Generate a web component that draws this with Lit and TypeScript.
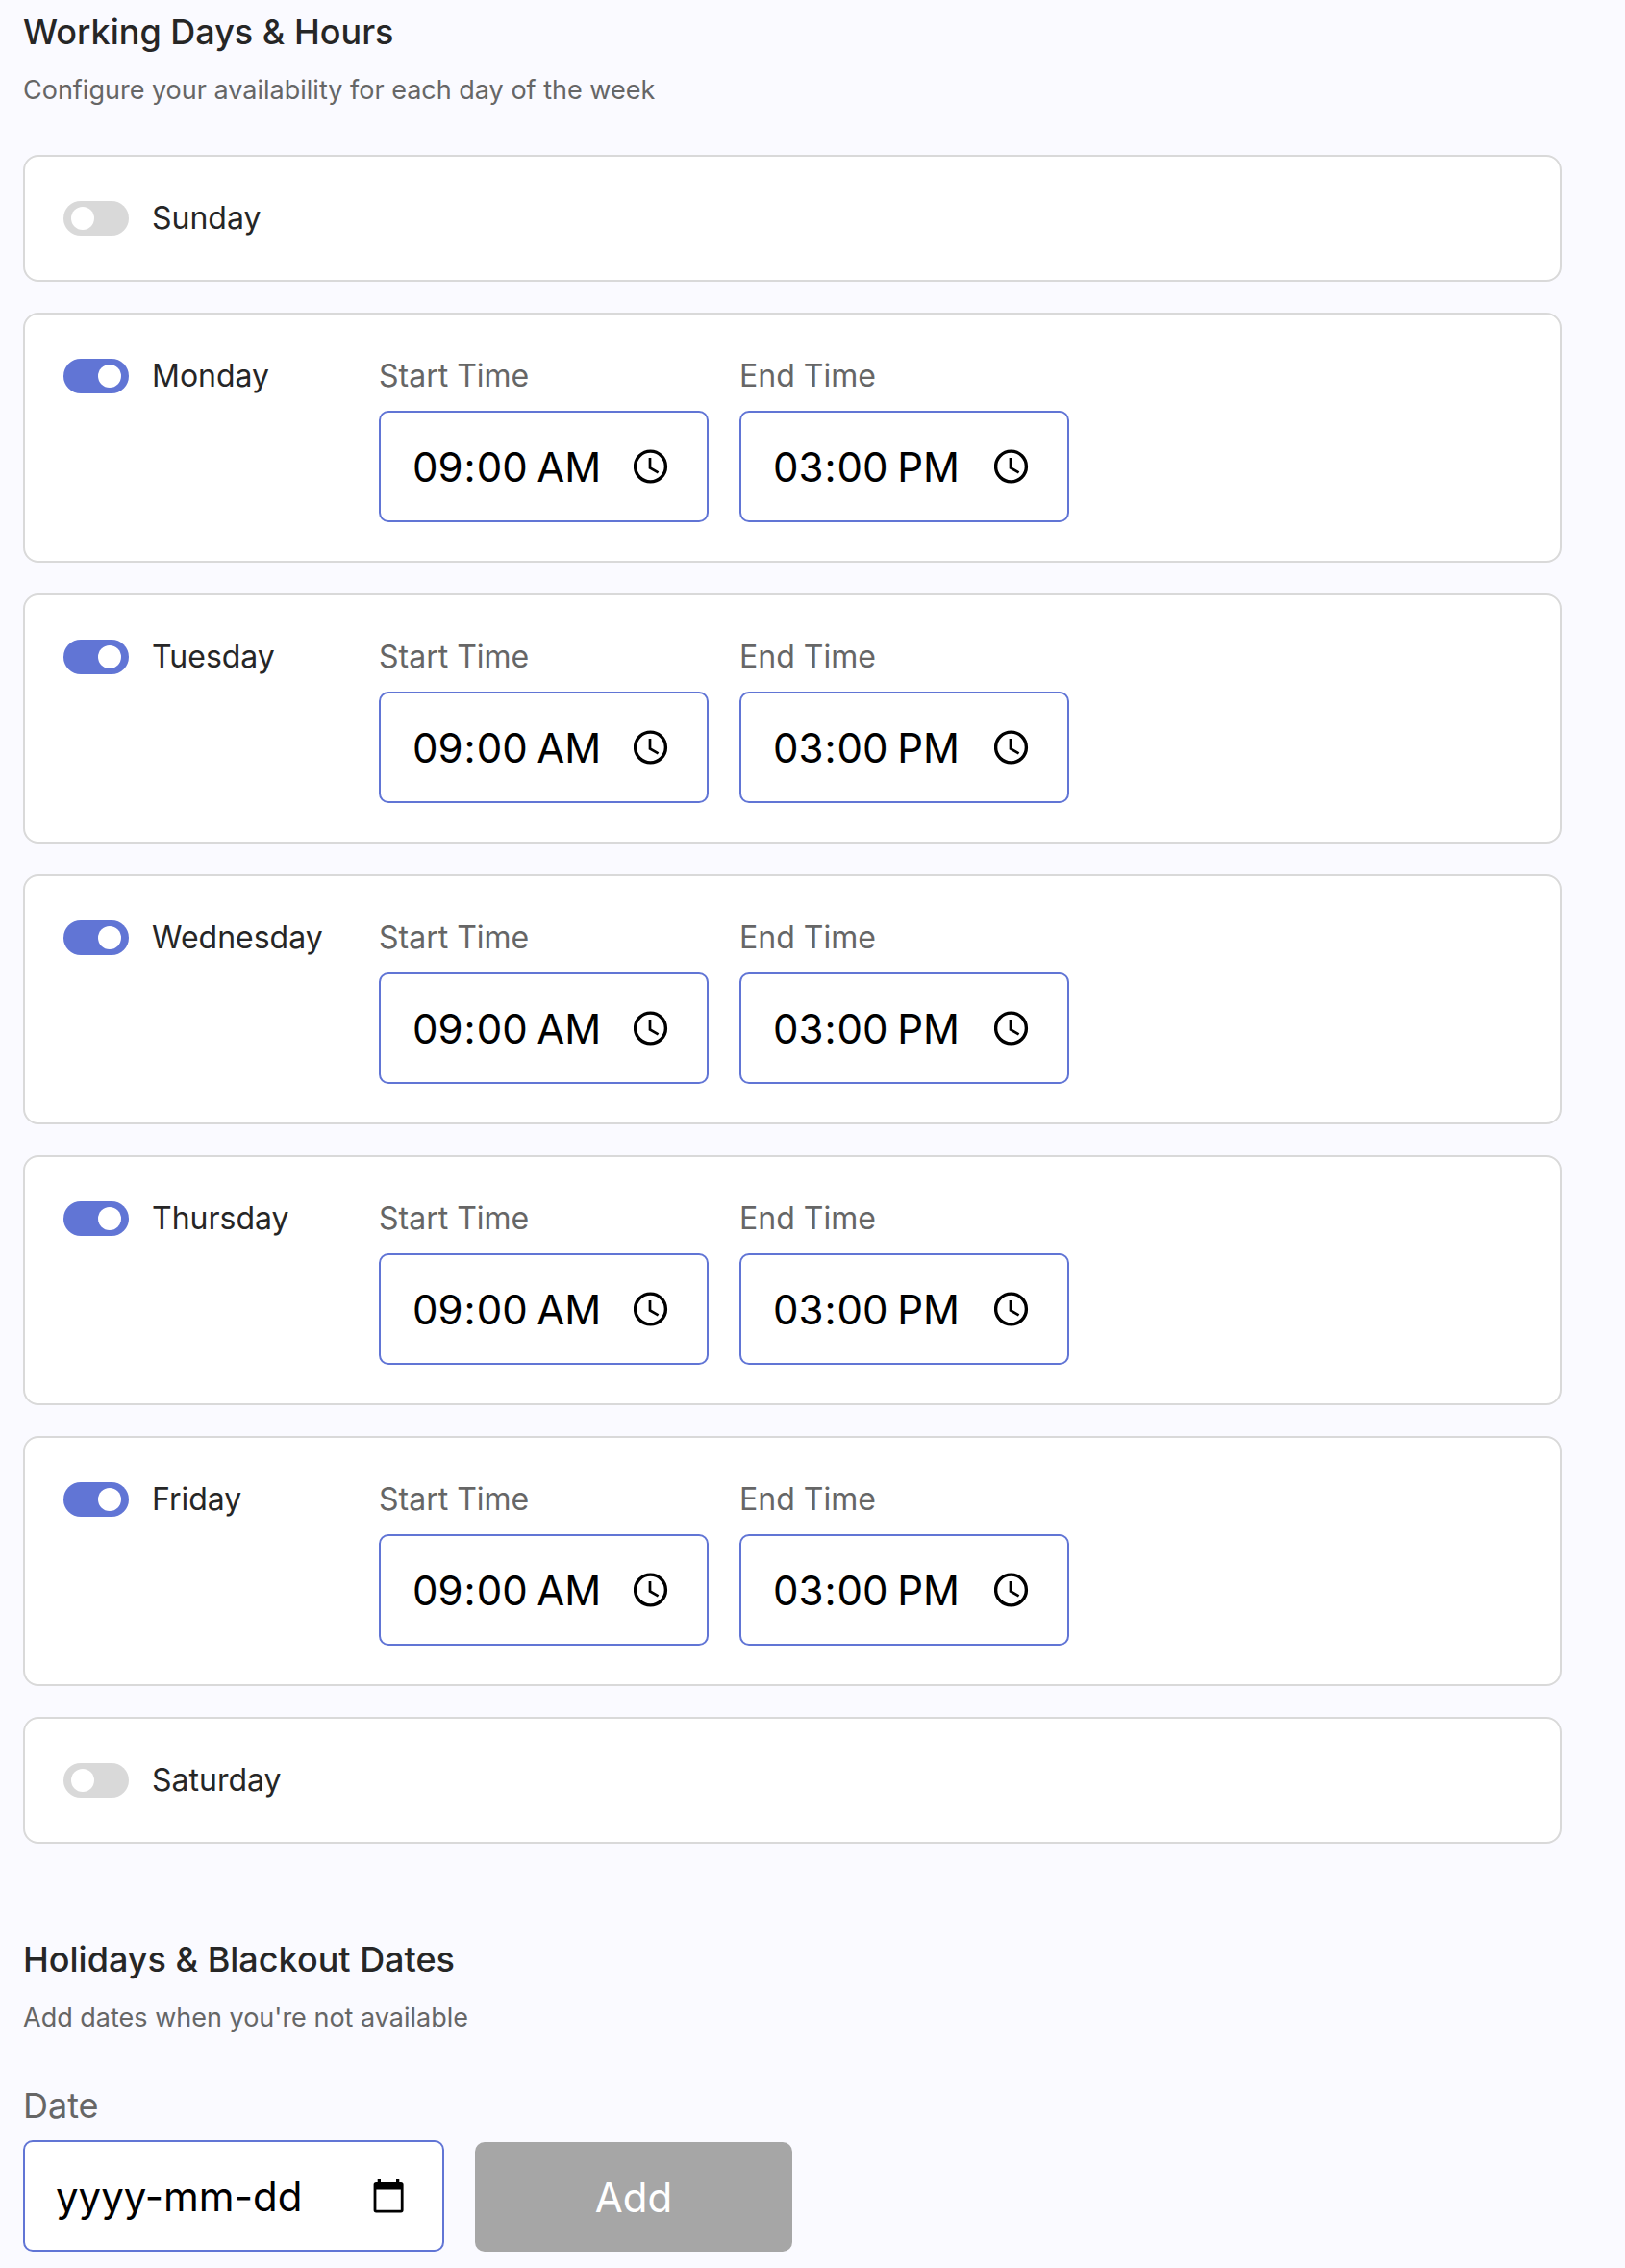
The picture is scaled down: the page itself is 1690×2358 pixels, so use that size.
import { LitElement, html, css, svg, nothing } from "lit";
import { customElement, property, state } from "lit/decorators.js";

interface Day {
  name: string;
  enabled: boolean;
  start: string;
  end: string;
}

const day = (name: string, enabled: boolean): Day => ({
  name,
  enabled,
  start: "09:00",
  end: "15:00",
});

const clockShape = svg`
  <circle cx="17.5" cy="18" r="15.9" stroke-width="3.4"></circle>
  <path d="M17 9v10.4l8.6 5" stroke-width="2.7"></path>
`;

const calendarShape = svg`
  <path
    fill="currentColor"
    fill-rule="evenodd"
    stroke="none"
    d="M4.7 4V0H8v4h16V0h3.3v4h1.7a2.6 2.6 0 0 1 2.6 2.6v26.2a2.6 2.6 0 0 1-2.6 2.6H3.2a2.6 2.6 0 0 1-2.6-2.6V6.6A2.6 2.6 0 0 1 3.2 4zM3.4 11.4v21.4h25.4V11.4z"
  ></path>
`;

const fieldStyles = css`
  * {
    box-sizing: border-box;
  }

  .field {
    display: flex;
    flex-direction: column;
    gap: 12px;
  }

  .label {
    line-height: 48px;
    color: #666666;
  }

  .box {
    display: flex;
    align-items: center;
    height: 116px;
    padding: 0 40px 0 32px;
    border: 2px solid #6175d5;
    border-radius: 10px;
    background: #ffffff;
  }

  .input {
    flex: 1;
    min-width: 0;
    padding: 0;
    border: 0;
    outline: 0;
    background: transparent;
    font: inherit;
    font-size: 42px;
    color: #000000;
  }

  .input::placeholder {
    color: #000000;
    opacity: 1;
  }

  .input::-webkit-calendar-picker-indicator {
    display: none;
  }

  .picker {
    flex: none;
    display: flex;
    padding: 0;
    border: 0;
    background: none;
    color: #000000;
    cursor: pointer;
  }

  .icon {
    display: block;
    height: 36px;
    fill: none;
    stroke: currentColor;
  }
`;

@customElement("time-field")
class TimeField extends LitElement {
  @property() label = "";
  @property() value = "";

  static styles = [
    fieldStyles,
    css`
      :host {
        display: block;
        width: 343px;
        max-width: 100%;
      }

      .label {
        font-size: 32px;
      }
    `,
  ];

  private openPicker() {
    this.renderRoot.querySelector("input")?.showPicker();
  }

  render() {
    return html`
      <div class="field">
        <label class="label" for="time">${this.label}</label>
        <div class="box">
          <input class="input" id="time" type="time" .value=${this.value} />
          <button
            class="picker"
            type="button"
            aria-label="Choose ${this.label}"
            @click=${this.openPicker}
          >
            <svg class="icon" width="36" viewBox="0 0 36 36" aria-hidden="true">${clockShape}</svg>
          </button>
        </div>
      </div>
    `;
  }
}

@customElement("day-card")
class DayCard extends LitElement {
  @property({ attribute: false }) day!: Day;

  static styles = css`
    * {
      box-sizing: border-box;
    }

    :host {
      display: block;
    }

    .card {
      display: flex;
      flex-wrap: wrap;
      align-items: flex-start;
      gap: 32px;
      padding: 40px;
      border: 2px solid #d9d9d9;
      border-radius: 16px;
      background: #ffffff;
    }

    .day {
      display: flex;
      align-items: center;
      gap: 24px;
      width: 296px;
      font-size: 32px;
      font-weight: 400;
      line-height: 48px;
      color: #262626;
      cursor: pointer;
    }

    .toggle {
      appearance: none;
      display: flex;
      align-items: center;
      flex: none;
      width: 68px;
      height: 36px;
      margin: 0;
      padding: 0 8px;
      border-radius: 18px;
      background: #d9d9d9;
      cursor: pointer;
    }

    .toggle::before {
      content: "";
      width: 24px;
      height: 24px;
      border-radius: 50%;
      background: #ffffff;
    }

    .toggle:checked {
      justify-content: flex-end;
      background: #6175d5;
    }
  `;

  private toggle(event: Event) {
    this.day = { ...this.day, enabled: (event.target as HTMLInputElement).checked };
  }

  render() {
    const { name, enabled, start, end } = this.day;
    return html`
      <div class="card">
        <label class="day">
          <input
            class="toggle"
            type="checkbox"
            role="switch"
            .checked=${enabled}
            @change=${this.toggle}
          />
          <span>${name}</span>
        </label>
        ${enabled
          ? html`
              <time-field label="Start Time" .value=${start}></time-field>
              <time-field label="End Time" .value=${end}></time-field>
            `
          : nothing}
      </div>
    `;
  }
}

@customElement("app-root")
class AppRoot extends LitElement {
  @state() private date = "";
  @state() private holidays: string[] = [];

  private days: Day[] = [
    day("Sunday", false),
    day("Monday", true),
    day("Tuesday", true),
    day("Wednesday", true),
    day("Thursday", true),
    day("Friday", true),
    day("Saturday", false),
  ];

  static styles = [
    fieldStyles,
    css`
      :host {
        display: block;
        min-height: 100vh;
        background: #fafaff;
        font-family: Inter, "Open Sans", sans-serif;
      }

      .page {
        display: flex;
        flex-direction: column;
        gap: 94px;
        padding: 7px 66px 17px 24px;
      }

      .title {
        margin: 0 0 15px;
        font-size: 36px;
        font-weight: 500;
        line-height: 52px;
        color: #262626;
      }

      .hint {
        margin: 0 0 47px;
        font-size: 27px;
        line-height: 40px;
        color: #666666;
      }

      .days {
        display: flex;
        flex-direction: column;
        gap: 32px;
      }

      .form {
        display: flex;
        flex-wrap: wrap;
        align-items: flex-end;
        gap: 32px;
      }

      .date {
        width: 438px;
      }

      .date .label {
        font-size: 36px;
      }

      .add {
        width: 330px;
        height: 114px;
        padding: 0;
        border: 0;
        border-radius: 10px;
        background: #6175d5;
        font: inherit;
        font-size: 42px;
        color: #ffffff;
      }

      .add:disabled {
        background: #a6a6a6;
      }

      .holidays {
        margin: 32px 0 0;
        font-size: 32px;
        line-height: 48px;
      }
    `,
  ];

  private onInput(event: Event) {
    this.date = (event.target as HTMLInputElement).value;
  }

  private focusDate() {
    this.renderRoot.querySelector<HTMLInputElement>("#date")?.focus();
  }

  private add() {
    this.holidays = [...this.holidays, this.date];
    this.date = "";
  }

  render() {
    const valid = /^\d{4}-\d{2}-\d{2}$/.test(this.date);
    return html`
      <main class="page">
        <section>
          <h2 class="title">Working Days &amp; Hours</h2>
          <p class="hint">Configure your availability for each day of the week</p>
          <div class="days">${this.days.map((d) => html`<day-card .day=${d}></day-card>`)}</div>
        </section>
        <section>
          <h2 class="title">Holidays &amp; Blackout Dates</h2>
          <p class="hint">Add dates when you're not available</p>
          <div class="form">
            <div class="field date">
              <label class="label" for="date">Date</label>
              <div class="box">
                <input
                  class="input"
                  id="date"
                  type="text"
                  placeholder="yyyy-mm-dd"
                  .value=${this.date}
                  @input=${this.onInput}
                />
                <button
                  class="picker"
                  type="button"
                  aria-label="Choose date"
                  @click=${this.focusDate}
                >
                  <svg class="icon" width="32" viewBox="0 0 32 36" aria-hidden="true">
                    ${calendarShape}
                  </svg>
                </button>
              </div>
            </div>
            <button class="add" type="button" ?disabled=${!valid} @click=${this.add}>Add</button>
          </div>
          ${this.holidays.length
            ? html`<ul class="holidays">
                ${this.holidays.map((h) => html`<li>${h}</li>`)}
              </ul>`
            : nothing}
        </section>
      </main>
    `;
  }
}
